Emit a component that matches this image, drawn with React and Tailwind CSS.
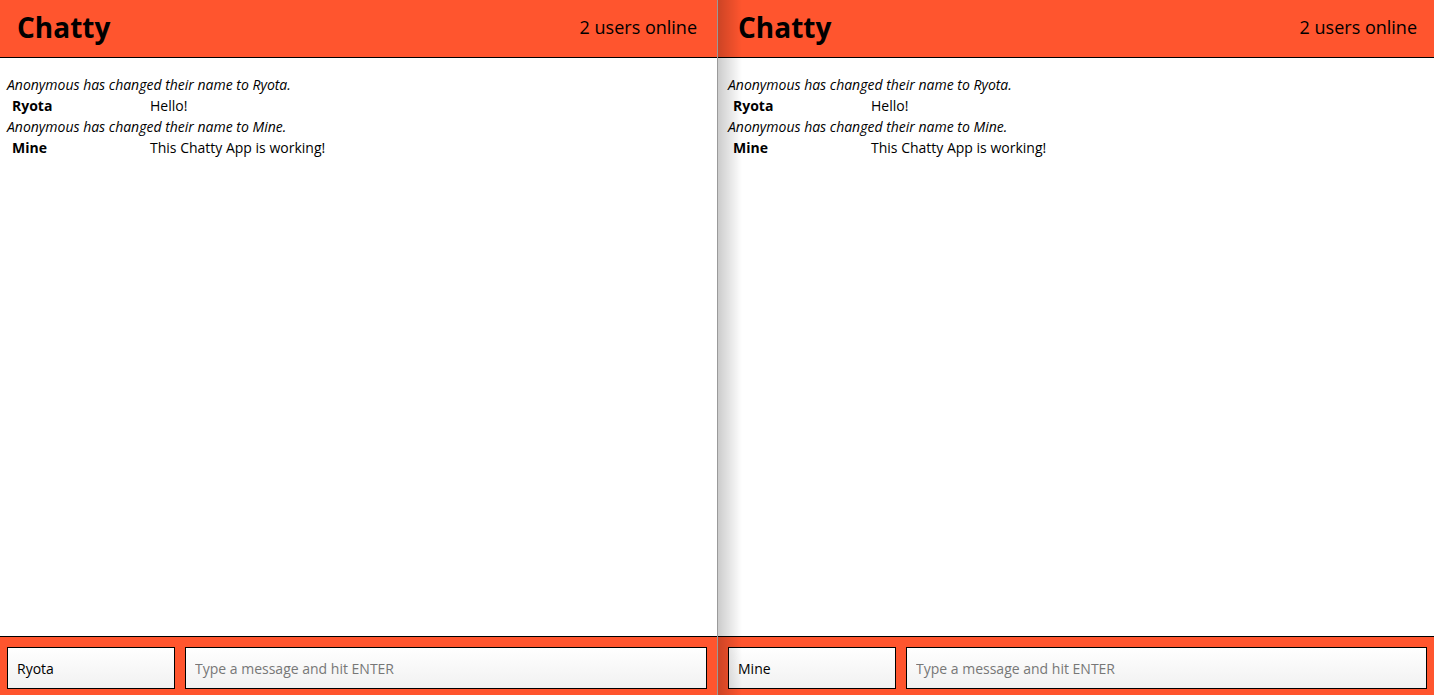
import React from "react";

const messages = [
  { type: "system", content: "Anonymous has changed their name to Ryota." },
  { type: "message", username: "Ryota", content: "Hello!" },
  { type: "system", content: "Anonymous has changed their name to Mine." },
  { type: "message", username: "Mine", content: "This Chatty App is working!" },
];

function ChatWindow({ name, right }) {
  return (
    <div className={`relative flex h-full flex-col bg-white ${right ? "flex-1" : "w-[717px] shrink-0"}`}>
      {/* Navbar */}
      <nav
        className={`flex h-[58px] shrink-0 items-center justify-between border-b border-black bg-[#ff552e] pb-[3px] ${
          right ? "pl-[20px] pr-[17px]" : "pl-[17px] pr-[20px]"
        }`}
      >
        <span className="text-[28px] font-bold leading-none text-black">Chatty</span>
        <span className="text-[18px] leading-none text-black">2 users online</span>
      </nav>

      {/* Message list */}
      <main className="flex-1 overflow-hidden pt-[16px] text-[14px] text-black">
        {messages.map((m, i) =>
          m.type === "system" ? (
            <div key={i} className={`h-[21px] italic leading-[21px] ${right ? "pl-[10px]" : "pl-[7px]"}`}>
              {m.content}
            </div>
          ) : (
            <div key={i} className="flex h-[21px] leading-[21px]">
              <span className={`shrink-0 font-bold ${right ? "w-[153px] pl-[15px]" : "w-[150px] pl-[12px]"}`}>
                {m.username}
              </span>
              <span>{m.content}</span>
            </div>
          )
        )}
      </main>

      {/* Chat bar */}
      <footer
        className={`flex h-[59px] shrink-0 gap-[10px] border-t border-black bg-[#ff552e] pb-[6px] pt-[10px] ${
          right ? "pl-[10px] pr-[7px]" : "pl-[7px] pr-[10px]"
        }`}
      >
        <input
          defaultValue={name}
          className="h-[42px] w-[168px] shrink-0 border border-black bg-gradient-to-b from-white to-[#f1f1f1] px-[9px] text-[14px] text-black outline-none"
        />
        <input
          placeholder="Type a message and hit ENTER"
          className="h-[42px] min-w-0 flex-1 border border-black bg-gradient-to-b from-white to-[#f1f1f1] px-[9px] text-[14px] text-black outline-none placeholder:text-[#777]"
        />
      </footer>

      {right && (
        <div className="pointer-events-none absolute inset-y-0 left-0 w-[24px] bg-gradient-to-r from-black/20 to-transparent" />
      )}
    </div>
  );
}

export default function App() {
  return (
    <div
      className="flex h-[695px] w-[1434px] overflow-hidden"
      style={{ fontFamily: '"Open Sans", "Noto Sans", sans-serif' }}
    >
      <ChatWindow name="Ryota" />
      <div className="w-px shrink-0 bg-[#9a9a9a]" />
      <ChatWindow name="Mine" right />
    </div>
  );
}
